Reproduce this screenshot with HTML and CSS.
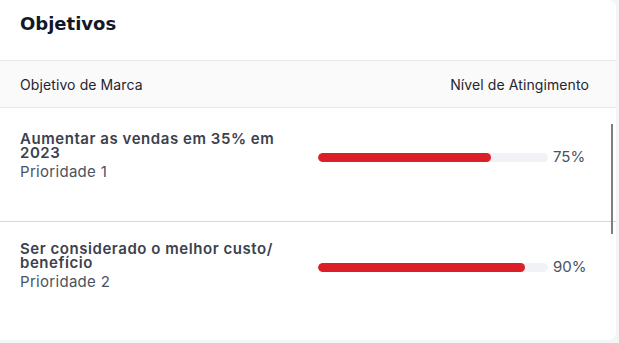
FILE: index.html
```html
<!DOCTYPE html>
<html lang="pt-BR">
<head>
<meta charset="utf-8">
<title>Objetivos</title>
<link rel="stylesheet" href="styles.css">
</head>
<body>
<section class="card">
  <h2 class="card-title">Objetivos</h2>
  <div class="table-head">
    <span class="th">Objetivo de Marca</span>
    <span class="th th-right">Nível de Atingimento</span>
  </div>
  <div class="table-body">
    <div class="row">
      <div class="goal">
        <div class="goal-name">Aumentar as vendas em 35% em 2023</div>
        <div class="goal-priority">Prioridade 1</div>
      </div>
      <div class="level">
        <div class="track"><div class="fill" style="width:75%"></div></div>
        <span class="pct">75%</span>
      </div>
    </div>
    <div class="row">
      <div class="goal">
        <div class="goal-name">Ser considerado o melhor custo/ benefício</div>
        <div class="goal-priority">Prioridade 2</div>
      </div>
      <div class="level">
        <div class="track"><div class="fill" style="width:90%"></div></div>
        <span class="pct">90%</span>
      </div>
    </div>
  </div>
  <div class="scroll-thumb"></div>
</section>
</body>
</html>
```
FILE: styles.css
```css
html, body {
  margin: 0;
  padding: 0;
  background: #f3f5f7;
}
body {
  font-family: "Inter", "Noto Sans", sans-serif;
  width: 619px;
  height: 343px;
  overflow: hidden;
}
.card {
  position: relative;
  width: 616px;
  height: 340px;
  background: #ffffff;
  border-radius: 0 8px 8px 0;
  overflow: hidden;
}
.card-title {
  margin: 0;
  padding: 12px 20px 24px;
  font-family: "DejaVu Sans", sans-serif;
  font-size: 18px;
  font-weight: 700;
  line-height: 24px;
  color: #111827;
}
.table-head {
  display: flex;
  justify-content: space-between;
  align-items: center;
  height: 46px;
  padding: 0 27px 0 20px;
  background: #fafafa;
  border-top: 1px solid #e8e8e8;
  border-bottom: 1px solid #e8e8e8;
}
.th {
  font-size: 14px;
  line-height: 17px;
  color: #1f2430;
  letter-spacing: 0.1px;
}
.table-body {
  padding-top: 4px;
}
.row {
  display: grid;
  grid-template-columns: 280px 1fr;
  column-gap: 18px;
  align-items: center;
  padding: 20px 27px 39px 20px;
  border-bottom: 1px solid #d6d6dc;
}
.row:last-child {
  border-bottom: none;
}
.goal-name {
  font-size: 15px;
  font-weight: 600;
  line-height: 13.5px;
  letter-spacing: 0.55px;
  color: #3b414d;
  padding-top: 0;
}
.goal-priority {
  margin-top: 3px;
  font-size: 15px;
  line-height: 20px;
  letter-spacing: 0.3px;
  color: #4b5260;
}
.level {
  display: flex;
  align-items: center;
  gap: 5px;
}
.track {
  width: 230px;
  height: 9px;
  border-radius: 5px;
  background: #f1f2f6;
  overflow: hidden;
}
.fill {
  height: 100%;
  border-radius: 5px;
  background: #dc1f26;
}
.pct {
  font-size: 15px;
  line-height: 20px;
  color: #4a5263;
}
.scroll-thumb {
  position: absolute;
  left: 611px;
  top: 124px;
  width: 2px;
  height: 110px;
  background: #7f7f7f;
}
```
